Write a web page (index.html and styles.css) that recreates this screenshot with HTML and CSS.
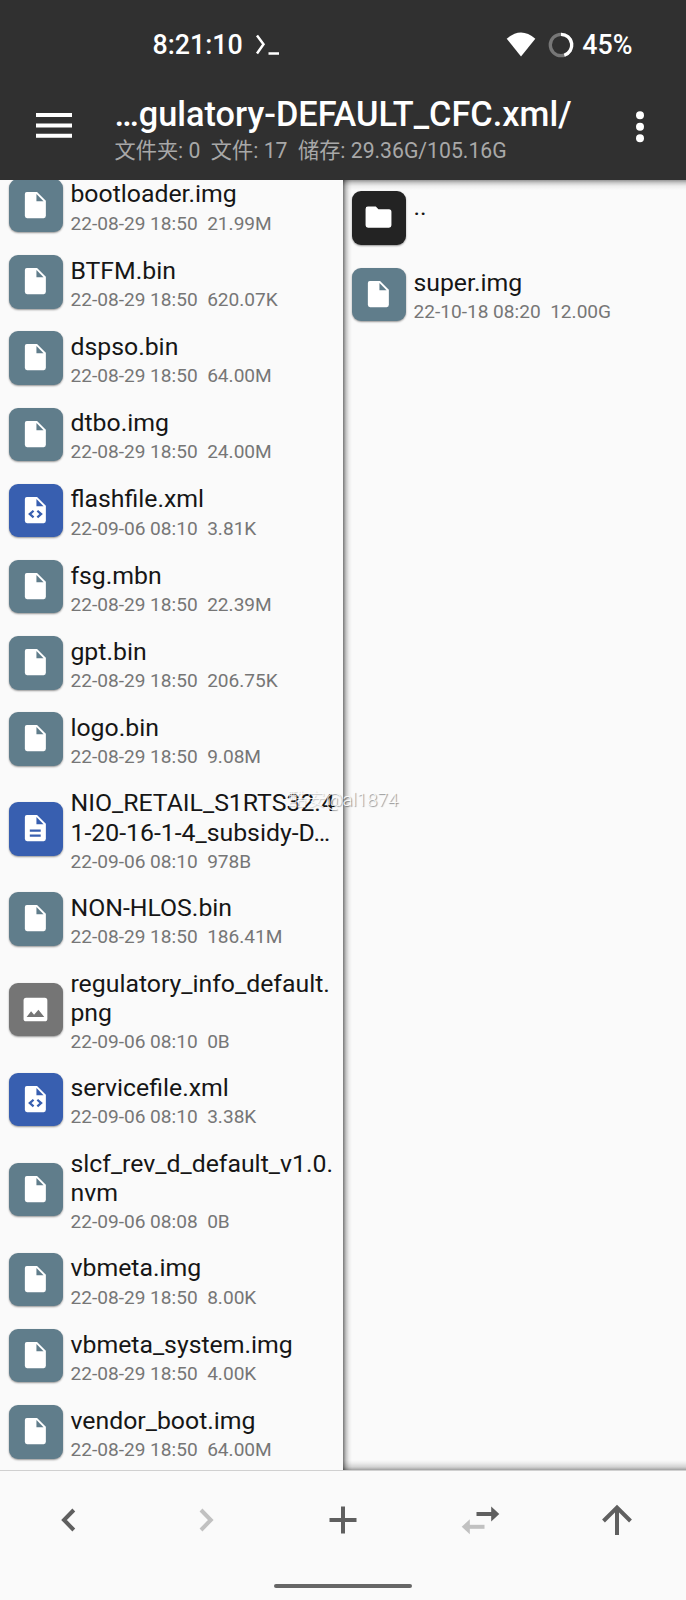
FILE: index.html
```
<!DOCTYPE html>
<html lang="zh-CN">
<head>
<meta charset="utf-8">
<title>文件管理器</title>
<link rel="stylesheet" href="styles.css">
</head>
<body>
<svg width="0" height="0" class="defs">
  <defs>
    <symbol id="file" viewBox="0 0 54 54"><path fill="#fff" d="M18 13H28.300L37.200 22V37.200Q37.200 39.500 35 39.500H18.300Q16 39.500 16 37.200V15.200Q16 13 18 13Z"/><path class="fold" d="M27.700 15.200V22.400H34.900Z"/></symbol>
    <symbol id="code" viewBox="0 0 54 54"><use href="#file"/><path class="cut" d="M24.800 27L21 30.300L24.800 33.600M28.600 27L32.400 30.300L28.600 33.600"/></symbol>
    <symbol id="doc" viewBox="0 0 54 54"><use href="#file"/><path class="cut" d="M21 28.800H32M21 34H32"/></symbol>
    <symbol id="image" viewBox="0 0 54 54"><rect x="14.700" y="15" width="24" height="23.700" rx="2.600" fill="#fff"/><path class="fold" d="M17.800 34.300L22.300 28.500L25.300 32L29.700 27L35.600 34.300Z"/></symbol>
    <symbol id="folder" viewBox="0 0 54 54"><path fill="#fff" d="M16 15.700H24L26.700 18.400H37.300Q39.800 18.400 39.800 21V34.500Q39.800 37 37.300 37H16.200Q13.700 37 13.700 34.500V18.200Q13.700 15.700 16 15.700Z"/></symbol>
  </defs>
</svg>
<div class="screen">
  <header class="header">
    <div class="status">
      <div class="clock">8:21:10</div>
      <svg class="prompt" width="26" height="24" viewBox="0 0 26 24"><path d="M2 2.500L8.500 11.300L2 20.500M13.500 20.500H24" fill="none" stroke="#fff" stroke-width="2.500"/></svg>
      <svg class="wifi" width="30" height="26" viewBox="0 0 30 26"><path d="M0.700 6.700Q15-5.700 29.300 6.700L15 24.500Z" fill="#fff"/></svg>
      <svg class="ring" width="26" height="26" viewBox="0 0 26 26" fill="none" stroke-width="3.300"><circle cx="13" cy="13" r="10.700" stroke="#777"/><path d="M13 2.300A10.700 10.700 0 0 1 16.300 23.200" stroke="#fff"/></svg>
      <div class="battery">45%</div>
    </div>
    <div class="bar">
      <svg class="menu" width="36" height="26" viewBox="0 0 36 26"><path d="M0 2H36M0 12.500H36M0 22.800H36" stroke="#fff" stroke-width="4"/></svg>
      <div class="titles">
        <div class="title">…gulatory-DEFAULT_CFC.xml/</div>
        <div class="subtitle">文件夹: 0&nbsp; 文件: 17&nbsp; 储存: 29.36G/105.16G</div>
      </div>
      <svg class="more" width="10" height="32" viewBox="0 0 10 32" fill="#fff"><circle cx="5" cy="4.200" r="4"/><circle cx="5" cy="15.700" r="4"/><circle cx="5" cy="27.200" r="4"/></svg>
    </div>
  </header>
  <main class="panes">
    <section class="pane left">
      <div class="row"><svg class="icon"><use href="#file"/></svg><div class="info"><div class="name">bootloader.img</div><div class="meta">22-08-29 18:50&nbsp; 21.99M</div></div></div>
      <div class="row"><svg class="icon"><use href="#file"/></svg><div class="info"><div class="name">BTFM.bin</div><div class="meta">22-08-29 18:50&nbsp; 620.07K</div></div></div>
      <div class="row"><svg class="icon"><use href="#file"/></svg><div class="info"><div class="name">dspso.bin</div><div class="meta">22-08-29 18:50&nbsp; 64.00M</div></div></div>
      <div class="row"><svg class="icon"><use href="#file"/></svg><div class="info"><div class="name">dtbo.img</div><div class="meta">22-08-29 18:50&nbsp; 24.00M</div></div></div>
      <div class="row"><svg class="icon blue"><use href="#code"/></svg><div class="info"><div class="name">flashfile.xml</div><div class="meta">22-09-06 08:10&nbsp; 3.81K</div></div></div>
      <div class="row"><svg class="icon"><use href="#file"/></svg><div class="info"><div class="name">fsg.mbn</div><div class="meta">22-08-29 18:50&nbsp; 22.39M</div></div></div>
      <div class="row"><svg class="icon"><use href="#file"/></svg><div class="info"><div class="name">gpt.bin</div><div class="meta">22-08-29 18:50&nbsp; 206.75K</div></div></div>
      <div class="row"><svg class="icon"><use href="#file"/></svg><div class="info"><div class="name">logo.bin</div><div class="meta">22-08-29 18:50&nbsp; 9.08M</div></div></div>
      <div class="row tall"><svg class="icon blue"><use href="#doc"/></svg><div class="info"><div class="name">NIO_RETAIL_S1RTS32.4<br>1-20-16-1-4_subsidy-D…</div><div class="meta">22-09-06 08:10&nbsp; 978B</div></div></div>
      <div class="row"><svg class="icon"><use href="#file"/></svg><div class="info"><div class="name">NON-HLOS.bin</div><div class="meta">22-08-29 18:50&nbsp; 186.41M</div></div></div>
      <div class="row tall"><svg class="icon gray"><use href="#image"/></svg><div class="info"><div class="name">regulatory_info_default.<br>png</div><div class="meta">22-09-06 08:10&nbsp; 0B</div></div></div>
      <div class="row"><svg class="icon blue"><use href="#code"/></svg><div class="info"><div class="name">servicefile.xml</div><div class="meta">22-09-06 08:10&nbsp; 3.38K</div></div></div>
      <div class="row tall"><svg class="icon"><use href="#file"/></svg><div class="info"><div class="name">slcf_rev_d_default_v1.0.<br>nvm</div><div class="meta">22-09-06 08:08&nbsp; 0B</div></div></div>
      <div class="row"><svg class="icon"><use href="#file"/></svg><div class="info"><div class="name">vbmeta.img</div><div class="meta">22-08-29 18:50&nbsp; 8.00K</div></div></div>
      <div class="row"><svg class="icon"><use href="#file"/></svg><div class="info"><div class="name">vbmeta_system.img</div><div class="meta">22-08-29 18:50&nbsp; 4.00K</div></div></div>
      <div class="row"><svg class="icon"><use href="#file"/></svg><div class="info"><div class="name">vendor_boot.img</div><div class="meta">22-08-29 18:50&nbsp; 64.00M</div></div></div>
    </section>
    <section class="pane right">
      <div class="row"><svg class="icon black"><use href="#folder"/></svg><div class="info"><div class="name">..</div></div></div>
      <div class="row"><svg class="icon"><use href="#file"/></svg><div class="info"><div class="name">super.img</div><div class="meta">22-10-18 08:20&nbsp; 12.00G</div></div></div>
    </section>
    <div class="watermark"><span class="brand">酷安</span>@al1874</div>
  </main>
  <footer class="footer">
    <nav class="tools">
      <svg viewBox="0 0 40 40"><path d="M24.800 10L15 20L24.800 30"/></svg>
      <svg viewBox="0 0 40 40" class="dim"><path d="M15 10L24.800 20L15 30"/></svg>
      <svg viewBox="0 0 40 40"><path d="M20 6.500V33.500M6.500 20H33.500"/></svg>
      <svg viewBox="0 0 40 40"><path d="M16.500 14H33"/><path d="M31.200 6.500L39.300 14L31.200 21.500Z" class="solid"/><g class="dim"><path d="M24.500 26.800H8"/><path d="M9.800 19.300L1.700 26.800L9.800 34.300Z" class="solid"/></g></svg>
      <svg viewBox="0 0 40 40"><path d="M20 7V35M6.500 21L20 7.500L33.500 21"/></svg>
    </nav>
    <div class="home"></div>
  </footer>
</div>
</body>
</html>
```
FILE: styles.css
```
* { box-sizing: border-box; }
body { margin: 0; font-family: Roboto, "Noto Sans CJK SC", sans-serif; }
.defs { position: absolute; }
.screen { display: flex; flex-direction: column; width: 686px; height: 1600px; background: #fafafa; overflow: hidden; }

.header { flex: none; height: 180px; background: #303030; color: #fff; }
.status { display: flex; height: 90px; padding: 0 53.500px 0 152.500px; align-items: center; font-size: 26.800px; font-weight: 500; line-height: 30px; white-space: nowrap; }
.prompt { margin-left: 12.500px; }
.wifi { margin-left: auto; }
.ring { margin-left: 12px; }
.battery { margin-left: 8.500px; }
.bar { display: flex; height: 90px; padding: 0 41px 0 35.500px; }
.menu { flex: none; margin-top: 23px; }
.titles { margin-left: 43px; flex: 1; white-space: nowrap; }
.title { font-size: 34.300px; line-height: 40px; font-weight: 500; margin-top: 4px; }
.subtitle { font-size: 21.200px; line-height: 26px; margin-top: 4px; color: #a8a8a8; }
.more { flex: none; margin-top: 20.500px; }

.panes { position: relative; display: grid; grid-template-columns: 343px 343px; height: 1290px; flex: none; overflow: hidden; }
.pane { overflow: hidden; display: flex; flex-direction: column; height: 1290px; }
.left { justify-content: flex-end; }
.right {
  background:
    linear-gradient(to right, rgba(0,0,0,.52), rgba(0,0,0,.22) 3px, rgba(0,0,0,.06) 6px, transparent 9px),
    linear-gradient(to bottom, rgba(0,0,0,.4), rgba(0,0,0,.18) 3px, rgba(0,0,0,.05) 6px, transparent 10px),
    linear-gradient(to top, rgba(0,0,0,.36), rgba(0,0,0,.16) 3px, rgba(0,0,0,.05) 7px, transparent 10px);
}
.row { flex: none; display: flex; height: 76.230px; padding-left: 9.450px; align-items: center; }
.tall { height: 103.900px; }
.icon { flex: none; width: 53.500px; height: 53.500px; border-radius: 9px; background: #607d8b; color: #607d8b; box-shadow: 0 1px 2px rgba(0,0,0,.4); }
.blue { background: #385fb0; color: #385fb0; }
.gray { background: #757575; color: #757575; }
.black { background: #232323; color: #232323; }
.fold { fill: currentColor; }
.cut { fill: none; stroke: currentColor; stroke-width: 2.300; }
.info { align-self: flex-start; margin-left: 7.500px; padding-top: 12px; white-space: nowrap; }
.tall .info { padding-top: 11.200px; }
.name { font-size: 24.820px; line-height: 29.300px; color: #161616; }
.meta { font-size: 19.100px; line-height: 21.500px; margin-top: 3.900px; color: #767676; }
.watermark { position: absolute; left: 288px; top: 606.500px; font-size: 18.700px; font-weight: 300; line-height: 26px; color: rgba(255,255,255,.9); text-shadow: 1px 1px 1px rgba(0,0,0,.42); }
.brand { text-shadow: 1px 1px 1px rgba(0,0,0,.2); }

.footer { flex: none; height: 130px; border-top: 1px solid #d0d0d0; background: #fafafa; }
.tools { display: grid; grid-template-columns: repeat(5, 1fr); height: 98px; align-items: center; justify-items: center; }
.tools svg { width: 40px; height: 40px; overflow: visible; fill: none; stroke: #5f5f5f; stroke-width: 4; }
.tools .solid { fill: #5f5f5f; stroke: none; }
.tools .dim { stroke: #c1c1c1; }
.tools .dim .solid { fill: #c1c1c1; }
.home { width: 138px; height: 4px; margin: 15px auto 0; border-radius: 2px; background: #666; }
```
